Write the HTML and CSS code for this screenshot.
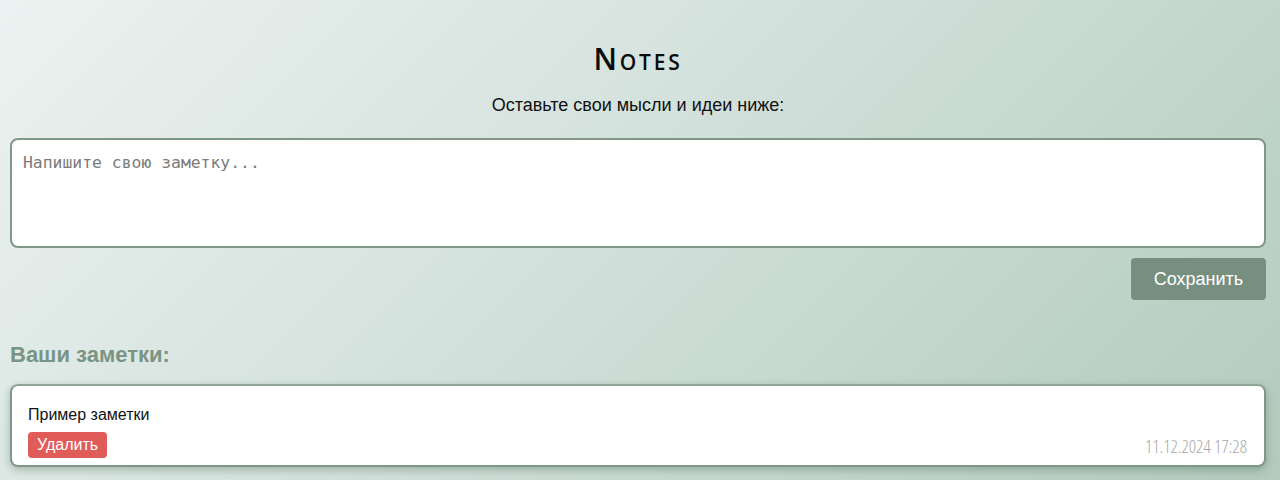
FILE: index.html
```html
<!DOCTYPE html>
<html lang="ru">
<head>
<meta charset="utf-8">
<title>Notes</title>
<link rel="stylesheet" href="styles.css">
</head>
<body>
<main class="app">
  <h1 class="title">Notes</h1>
  <p class="subtitle">Оставьте свои мысли и идеи ниже:</p>
  <textarea class="editor" placeholder="Напишите свою заметку..."></textarea>
  <div class="actions">
    <button class="save-btn">Сохранить</button>
  </div>
  <h2 class="notes-heading">Ваши заметки:</h2>
  <div class="note">
    <div class="note-body">
      <p class="note-text">Пример заметки</p>
      <button class="delete-btn">Удалить</button>
    </div>
    <span class="note-date">11.12.2024 17:28</span>
  </div>
</main>
</body>
</html>
```

FILE: styles.css
```css
html, body {
  margin: 0;
  height: 100%;
}
body {
  background: linear-gradient(135deg, #ecf2f1 0%, #d3e1dc 45%, #b2cbbd 100%);
  font-family: "Liberation Sans", Arial, sans-serif;
  color: #111;
  padding: 0 14px 0 10px;
  box-sizing: border-box;
  overflow: hidden;
}
.app {
  display: flex;
  flex-direction: column;
}
.title {
  margin: 40px 0 0;
  text-align: center;
  font-family: "Open Sans", sans-serif;
  font-variant: small-caps;
  font-weight: 600;
  font-size: 30px;
  letter-spacing: 2.8px;
  line-height: 38px;
  color: #0c0c0c;
}
.subtitle {
  margin: 16px 0 0;
  text-align: center;
  font-size: 18px;
  line-height: 22px;
}
.editor {
  margin-top: 22px;
  height: 110px;
  box-sizing: border-box;
  border: 2px solid #7e9787;
  border-radius: 8px;
  background: #fff;
  padding: 13px 11px;
  font-family: "DejaVu Sans Mono", monospace;
  font-size: 16.4px;
  resize: none;
  outline: none;
}
.editor::placeholder {
  color: #7b7b7b;
}
.actions {
  display: flex;
  justify-content: flex-end;
  margin-top: 10px;
}
.save-btn {
  background: #778f7f;
  color: #fff;
  border: none;
  border-radius: 4px;
  height: 42px;
  width: 135px;
  font-family: "Liberation Sans", Arial, sans-serif;
  font-size: 18px;
}
.notes-heading {
  margin: 42px 0 0;
  font-size: 22px;
  line-height: 26px;
  font-weight: 700;
  color: #7a9484;
}
.note {
  margin-top: 16px;
  height: 83px;
  box-sizing: border-box;
  background: #fff;
  border: 2px solid #7e9787;
  border-top-color: #8fa597;
  border-radius: 8px;
  box-shadow: 0 3px 8px rgba(60, 90, 70, 0.35);
  padding: 19px 17px 7px 16px;
  display: flex;
  justify-content: space-between;
  align-items: flex-end;
}
.note-body {
  display: flex;
  flex-direction: column;
  align-items: flex-start;
}
.note-text {
  margin: 0 0 7px;
  font-size: 16px;
  line-height: 20px;
}
.delete-btn {
  background: #e05c59;
  color: #fff;
  border: none;
  border-radius: 4px;
  height: 26px;
  padding: 0 9px;
  font-family: "Liberation Sans", Arial, sans-serif;
  font-size: 16px;
}
.note-date {
  font-family: "Open Sans", sans-serif;
  font-weight: 300;
  font-stretch: 75%;
  font-size: 18px;
  line-height: 22px;
  color: #a8a8a8;
  margin-bottom: 1px;
}
```
